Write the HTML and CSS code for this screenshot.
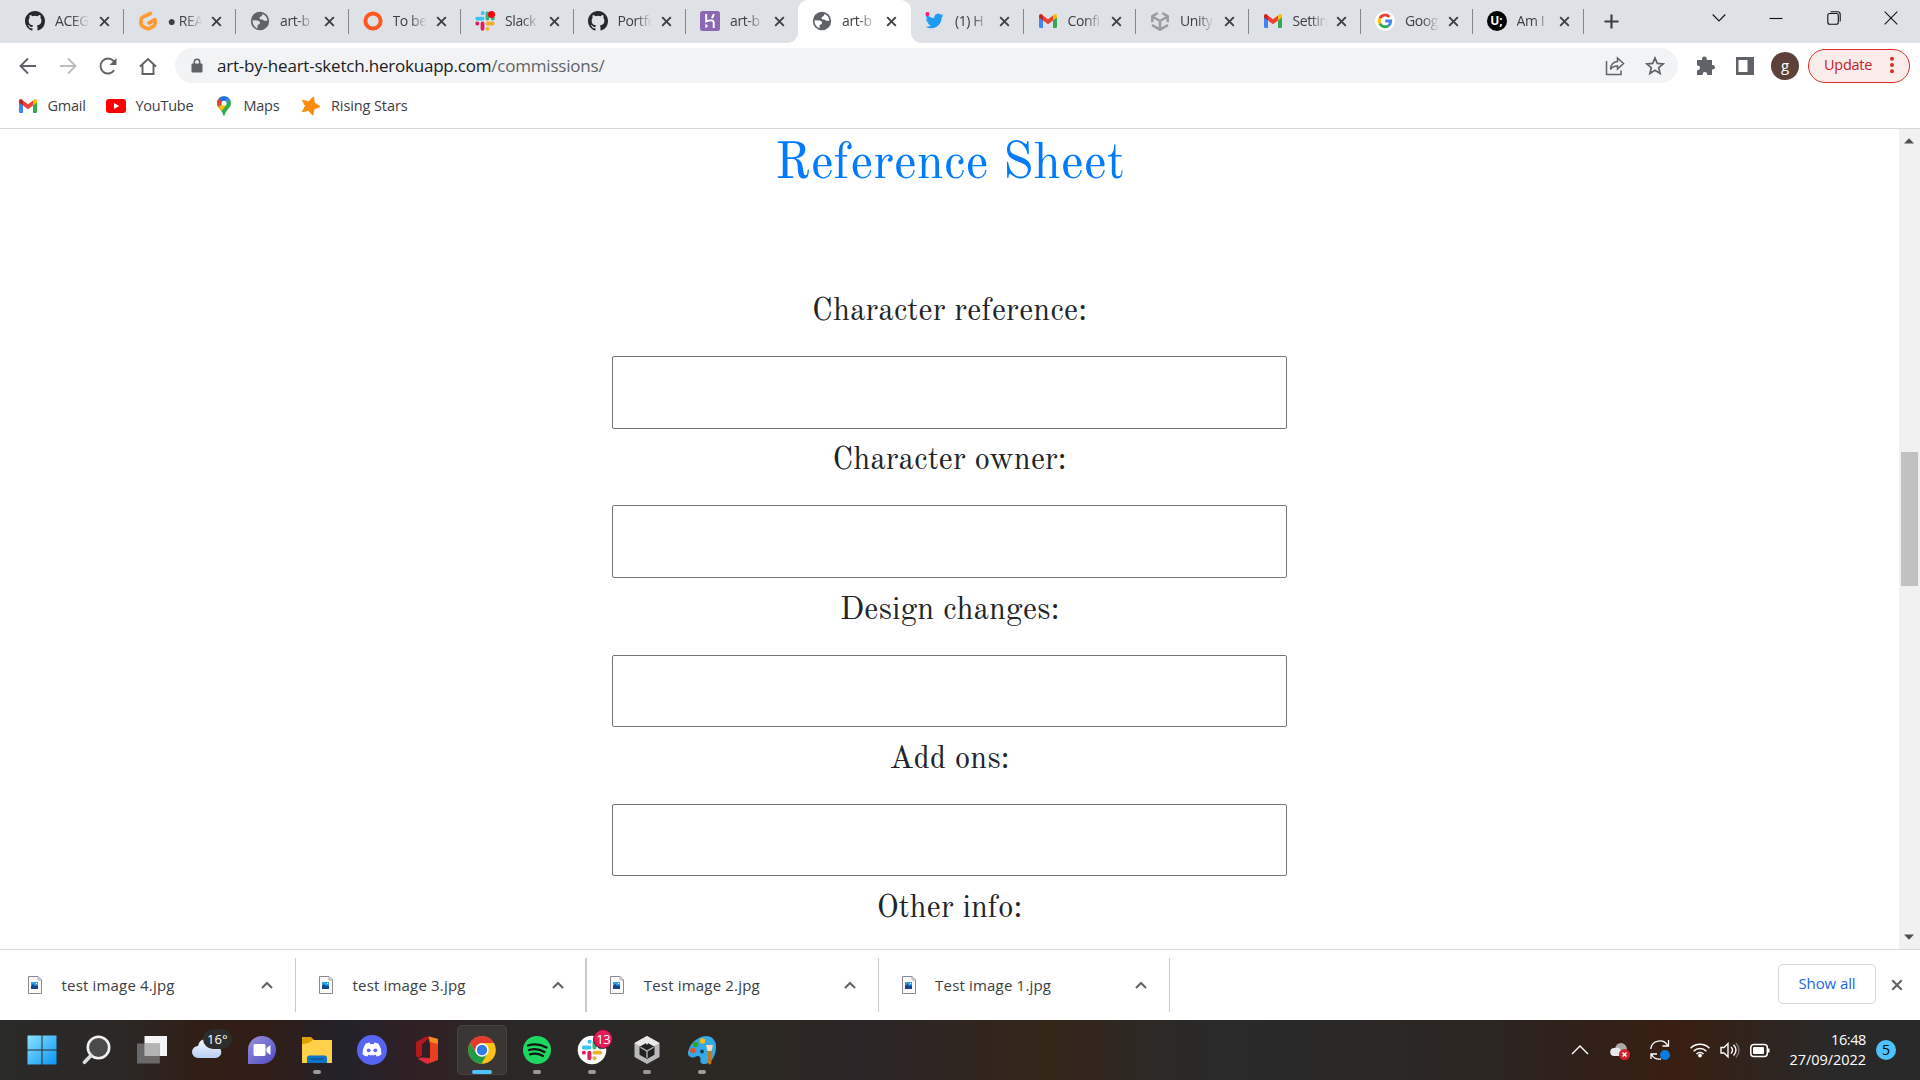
FILE: index.html
```html
<!DOCTYPE html>
<html lang="en">
<head>
<meta charset="utf-8">
<title>art-by-heart</title>
<link rel="stylesheet" href="styles.css">
</head>
<body>
<svg class="defs" aria-hidden="true">
  <symbol id="github" viewBox="0 0 16 16"><path fill="#24292f" d="M8 0C3.58 0 0 3.58 0 8c0 3.54 2.29 6.53 5.47 7.59.4.07.55-.17.55-.38 0-.19-.01-.82-.01-1.49-2.01.37-2.53-.49-2.69-.94-.09-.23-.48-.94-.82-1.13-.28-.15-.68-.52-.01-.53.63-.01 1.08.58 1.23.82.72 1.21 1.87.87 2.33.66.07-.52.28-.87.51-1.07-1.78-.2-3.64-.89-3.64-3.95 0-.87.31-1.59.82-2.15-.08-.2-.36-1.02.08-2.12 0 0 .67-.21 2.2.82a7.6 7.6 0 0 1 4 0c1.53-1.04 2.2-.82 2.2-.82.44 1.1.16 1.92.08 2.12.51.56.82 1.27.82 2.15 0 3.07-1.87 3.75-3.65 3.95.29.25.54.73.54 1.48 0 1.07-.01 1.93-.01 2.2 0 .21.15.46.55.38A8.01 8.01 0 0 0 16 8c0-4.42-3.58-8-8-8z"/></symbol>
  <symbol id="globe" viewBox="0 0 20 20"><circle cx="10" cy="10" r="9.2" fill="#5f6368"/><path fill="var(--tab)" d="M11 2.600c.5 1.600-.2 2.300-1.500 2.600-1 .2-1.200.8-1 1.700.1.700-.4 1-1.200 1-.9 0-1 .5-.8 1.100H11c1 0 1.500.6 1.500 1.500 0 .8.500 1 1.200 1 1 0 1.300-.4 1.600-1l2-.2c-.3 3.300-2.300 5.700-5 6.600v-1.400c-1.400 0-2-.8-2-2v-1L6.500 10H2.700c0-4 3-7.300 8.300-7.400z" opacity="0"/><path fill="var(--tab)" d="M2.600 9.300 7.300 9.500q2.800.3 2.700 2.400 0 1.500-1.600 1.700l-.8.300v3.300C4.500 16.300 2.300 13.200 2.600 9.300zM12.300 3.100c3 1 5 3.700 5.100 6.600l-3.500.1q-.7-1.400-2.100-1.300-2.300.1-2.300-1.500 0-1.400 1.500-1.600 1.500-.3 1.300-2.300z"/></symbol>
  <symbol id="gitpod" viewBox="0 0 20 20"><path d="M12.500 2.300 4.800 6.200Q3 7.100 3 9v3.800q0 1.500 1.400 2.300l4.200 2.300q1.400.8 2.800 0l4.200-2.300q1.400-.8 1.400-2.300V8.500l-6 3.300" fill="none" stroke="#ff9a2e" stroke-width="3.600" stroke-linecap="round" stroke-linejoin="round"/></symbol>
  <symbol id="ring" viewBox="0 0 20 20"><circle cx="10" cy="10" r="7.600" fill="none" stroke="#ff5722" stroke-width="4"/></symbol>
  <symbol id="slack" viewBox="0 0 20 20"><g stroke-width="3.800" stroke-linecap="round"><path stroke="#36c5f0" d="M2.200 7.600h5.300M7.700 2v.2"/><path stroke="#2eb67d" d="M12.400 2.400v5.200M17.800 7.600h.1"/><path stroke="#ecb22e" d="M12.400 12.500h5.400M12.400 17.800h.1"/><path stroke="#e01e5a" d="M7.500 12.500v5.300M2.200 12.500h.1"/></g></symbol>
  <symbol id="heroku" viewBox="0 0 20 20"><rect width="20" height="20" rx="2.500" fill="#8c68b2"/><path fill="none" stroke="#fff" stroke-width="1.900" d="M6.200 3v7.500C9 9.200 13.700 8.500 13.700 11.500V17M13.700 3c-.1 1.700-.9 3-2 4"/><path fill="#fff" d="m5.400 12.800 2.800 2.200-2.800 2.200z"/></symbol>
  <symbol id="twitter" viewBox="0 0 24 24"><path fill="#1d9bf0" d="M23.950 4.570a10 10 0 0 1-2.820.78 4.960 4.960 0 0 0 2.160-2.720 9.860 9.860 0 0 1-3.120 1.180 4.920 4.920 0 0 0-8.380 4.480C7.690 8.090 4.070 6.130 1.640 3.160a4.820 4.820 0 0 0-.67 2.480c0 1.710.87 3.210 2.190 4.100a4.900 4.900 0 0 1-2.230-.62v.06a4.920 4.920 0 0 0 3.950 4.830 4.860 4.860 0 0 1-2.210.09 4.940 4.940 0 0 0 4.600 3.420A9.870 9.870 0 0 1 0 19.540a13.900 13.900 0 0 0 7.550 2.210c9.050 0 14-7.500 14-13.980 0-.21 0-.42-.02-.63a9.940 9.940 0 0 0 2.420-2.570z"/><circle cx="2.600" cy="2.800" r="2.700" fill="#f91880"/></symbol>
  <symbol id="gmail" viewBox="0 0 20 20"><path fill="#4285f4" d="M1 5.500 5 8v9H2.300Q1 17 1 15.700z"/><path fill="#34a853" d="M15 8l4-2.500v10.200q0 1.300-1.300 1.300H15z"/><path fill="#ea4335" d="m5 4.400 5 3.800 5-3.800v5L10 13.200 5 9.400z"/><path fill="#c5221f" d="M1 5q0-2 1.800-2 .8 0 1.500.7L5 4.400v5L1 6.500z"/><path fill="#fbbc04" d="M19 5q0-2-1.800-2-.8 0-1.500.7l-.7.700v5l4-2.900z"/></symbol>
  <symbol id="unity" viewBox="0 0 20 20"><g fill="none" stroke="#9a9c9f" stroke-width="2.500"><path d="M7.800 2 2.300 5.200v6M12.200 2l5.500 3.200v6M2 14.200l8 4.500 8-4.500M10 18v-8M10 10 3.200 6M10 10l6.800-4"/></g><path fill="var(--tab)" d="m10 3 3.600 2L10 7 6.400 5z"/></symbol>
  <symbol id="google" viewBox="0 0 20 20"><circle cx="10" cy="10" r="10" fill="#fff"/><g fill="none" stroke-width="2.900"><path stroke="#ea4335" d="M4.800 7.300A5.800 5.800 0 0 1 14.300 6"/><path stroke="#fbbc05" d="M4.900 7.200a6 6 0 0 0 0 5.600"/><path stroke="#34a853" d="M4.900 12.700a5.800 5.800 0 0 0 8.800 1.800"/><path stroke="#4285f4" d="M10.200 10h5.500q.1 3-2 4.600"/></g></symbol>
  <symbol id="close" viewBox="0 0 12 12"><path d="m1.300 1.300 9.400 9.400m0-9.400-9.400 9.400" fill="none" stroke="currentColor" stroke-width="2.100"/></symbol>
  <symbol id="file" viewBox="0 0 14 18"><path d="M.5.500h9.500l3.500 3.500v13.500H.5z" fill="#fafafa" stroke="#8a8a8a"/><path d="M10 .5V4h3.500" fill="none" stroke="#aaa"/><path fill="#2aa0e8" d="M3 6h7v7H3z"/><path fill="#15468f" d="m3 10 2-2 2.500 2L9 9l1 1v3H3z"/><path fill="#fff" d="M8 7h1v1H8z"/></symbol>
  <symbol id="up" viewBox="0 0 12 8"><path d="m1 7 5-5 5 5" fill="none" stroke="#5f6368" stroke-width="2"/></symbol>
</svg>

<header class="browser">
  <div class="tabs">
    <div class="tab"><svg class="fav"><use href="#github"/></svg><span class="title">ACEG</span><svg class="x"><use href="#close"/></svg></div>
    <div class="tab"><svg class="fav"><use href="#gitpod"/></svg><span class="title">● REA</span><svg class="x"><use href="#close"/></svg></div>
    <div class="tab"><svg class="fav"><use href="#globe"/></svg><span class="title">art-b</span><svg class="x"><use href="#close"/></svg></div>
    <div class="tab"><svg class="fav"><use href="#ring"/></svg><span class="title">To be</span><svg class="x"><use href="#close"/></svg></div>
    <div class="tab"><span class="fav"><svg><use href="#slack"/></svg><i class="alert"></i></span><span class="title">Slack</span><svg class="x"><use href="#close"/></svg></div>
    <div class="tab"><svg class="fav"><use href="#github"/></svg><span class="title">Portfo</span><svg class="x"><use href="#close"/></svg></div>
    <div class="tab no-line"><svg class="fav"><use href="#heroku"/></svg><span class="title">art-b</span><svg class="x"><use href="#close"/></svg></div>
    <div class="tab active"><svg class="fav"><use href="#globe"/></svg><span class="title">art-b</span><svg class="x"><use href="#close"/></svg></div>
    <div class="tab"><svg class="fav bird"><use href="#twitter"/></svg><span class="title">(1) H</span><svg class="x"><use href="#close"/></svg></div>
    <div class="tab"><svg class="fav"><use href="#gmail"/></svg><span class="title">Confi</span><svg class="x"><use href="#close"/></svg></div>
    <div class="tab"><svg class="fav"><use href="#unity"/></svg><span class="title">Unity</span><svg class="x"><use href="#close"/></svg></div>
    <div class="tab"><svg class="fav"><use href="#gmail"/></svg><span class="title">Settin</span><svg class="x"><use href="#close"/></svg></div>
    <div class="tab narrow"><svg class="fav"><use href="#google"/></svg><span class="title">Goog</span><svg class="x"><use href="#close"/></svg></div>
    <div class="tab narrow"><span class="fav ui">U;</span><span class="title">Am I</span><svg class="x"><use href="#close"/></svg></div>
    <svg class="plus" viewBox="0 0 16 16"><path d="M8 .5v15M.5 8h15" stroke="#3c4043" stroke-width="2.300"/></svg>
    <div class="controls">
      <svg viewBox="0 0 14 14"><path d="m.7 3.500 6.300 6.500 6.300-6.500"/></svg>
      <svg viewBox="0 0 14 14"><path d="M.5 7.500h13"/></svg>
      <svg viewBox="0 0 14 14"><rect x=".8" y="2.500" width="10.500" height="10.700" rx="2"/><path d="M3.500.7h7q2.700 0 2.700 2.700v7"/></svg>
      <svg viewBox="0 0 14 14"><path d="m.7.700 12.600 12.600m0-12.600L.7 13.300"/></svg>
    </div>
  </div>

  <div class="toolbar">
    <svg class="nav" viewBox="0 0 20 20"><path d="M18 10H3M10 2.500 2.500 10l7.500 7.500"/></svg>
    <svg class="nav off" viewBox="0 0 20 20"><path d="M2 10h15M10 2.500l7.500 7.500-7.500 7.500"/></svg>
    <svg class="nav" viewBox="0 0 20 20"><path d="M16.200 14.300a7.500 7.500 0 1 1-.7-9.400l1.500 1.900"/><path d="M18.500 2v7h-7z" fill="#5f6368" stroke="none"/></svg>
    <svg class="nav" viewBox="0 0 20 20"><path d="M2 10.500 10 3l8 7.500M4.500 9v9h11V9"/></svg>
    <div class="address">
      <svg class="lock" viewBox="0 0 12 15"><rect x=".5" y="5.500" width="11" height="9" rx="1" fill="#5f6368"/><path d="M3.300 6V4a2.700 2.700 0 0 1 5.400 0v2" fill="none" stroke="#5f6368" stroke-width="1.600"/></svg>
      <span class="url">art-by-heart-sketch.herokuapp.com<span>/commissions/</span></span>
      <svg class="share" viewBox="0 0 20 20"><path d="M1.500 5v13.500h14.500v-4M12.500 2l6 5.500-6 5.500v-3q-5 0-7 3.500.5-7.500 7-8z" fill="none" stroke="#5f6368" stroke-width="1.500"/></svg>
      <svg class="star" viewBox="0 0 20 20"><path d="m10 2 2.300 5.400 5.800.5-4.400 3.800 1.400 5.700L10 14.300l-5.100 3.100 1.400-5.700-4.400-3.800 5.800-.5z" fill="none" stroke="#5f6368" stroke-width="1.700"/></svg>
    </div>
    <svg class="puzzle" viewBox="0 0 20 20"><path fill="#5f6368" d="M2 4h5V3a2.400 2.400 0 0 1 4.800 0v1H17v5h.700a2.300 2.300 0 0 1 0 4.600H17V19h-4.800v-.6a2.300 2.300 0 0 0-4.600 0v.6H2v-4.800h.600a2.400 2.400 0 0 0 0-4.800H2z"/></svg>
    <svg class="panel" viewBox="0 0 18 18"><path fill="#5f6368" d="M0 0h18v18H0zM2.500 3v12h9V3z" fill-rule="evenodd"/></svg>
    <span class="avatar">g</span>
    <div class="update"><span>Update</span><svg viewBox="0 0 4 18"><g fill="#d93025"><circle cx="2" cy="2.700" r="2"/><circle cx="2" cy="9" r="2"/><circle cx="2" cy="15.300" r="2"/></g></svg></div>
  </div>

  <nav class="bookmarks">
    <svg><use href="#gmail"/></svg><span class="b1">Gmail</span>
    <svg viewBox="0 0 20 20"><rect y="3" width="20" height="14" rx="3" fill="#f00"/><path d="m8 7 5.300 3L8 13z" fill="#fff"/></svg><span class="b2">YouTube</span>
    <svg viewBox="0 0 20 20"><clipPath id="pin"><path d="M10 .3a7 7 0 0 1 7 7c0 4.500-4.800 6-6.200 11.800q-.8 1.400-1.600 0C7.800 13.300 3 11.800 3 7.300a7 7 0 0 1 7-7z"/></clipPath><g clip-path="url(#pin)"><path fill="#34a853" d="M0 0h20v20H0z"/><path fill="#fbbc04" d="M0 14 10 7l2.500 2L5 18z"/><path fill="#ea4335" d="M0 0h6l3 6-6.500 7z"/><path fill="#1a73e8" d="M4.500 2.500 9 6l6-5L8-1z"/><path fill="#4285f4" d="m14.500 1-6 6 1 3 8-8z"/></g><circle cx="10" cy="7.300" r="2.500" fill="#fff"/></svg><span class="b3">Maps</span>
    <svg viewBox="0 0 20 20"><path fill="#f98e0a" stroke="#f98e0a" stroke-linejoin="round" d="m12.500.8.9 6.300 5.600 3.400-6 2.700-1.200 6-4.200-4.700-6.300 1.200L4.500 10 1.400 4.300l6.300 1.400z"/></svg><span class="b4">Rising Stars</span>
  </nav>
</header>

<div class="viewport">
  <main class="page">
    <h1>Reference Sheet</h1>
    <form class="form">
      <label for="f1">Character reference:</label><input id="f1" type="text">
      <label for="f2">Character owner:</label><input id="f2" type="text">
      <label for="f3">Design changes:</label><input id="f3" type="text">
      <label for="f4">Add ons:</label><input id="f4" type="text">
      <label>Other info:</label>
    </form>
  </main>
  <div class="scrollbar"><svg viewBox="0 0 10 6"><path d="M0 5.500h10L5 .3z"/></svg><i class="thumb"></i><svg viewBox="0 0 10 6"><path d="M0 .5h10L5 5.700z"/></svg></div>
</div>

<section class="downloads">
  <div class="item"><svg class="file"><use href="#file"/></svg><span>test image 4.jpg</span><svg class="up"><use href="#up"/></svg></div>
  <div class="item thick"><svg class="file"><use href="#file"/></svg><span>test image 3.jpg</span><svg class="up"><use href="#up"/></svg></div>
  <div class="item"><svg class="file"><use href="#file"/></svg><span>Test image 2.jpg</span><svg class="up"><use href="#up"/></svg></div>
  <div class="item"><svg class="file"><use href="#file"/></svg><span>Test image 1.jpg</span><svg class="up"><use href="#up"/></svg></div>
  <button class="showall">Show all</button>
  <svg class="dismiss"><use href="#close"/></svg>
</section>

<footer class="taskbar">
  <div class="apps">
    <div class="app"><svg viewBox="0 0 30 30"><defs><linearGradient id="win" x2="1" y2="1"><stop stop-color="#8ae4ff"/><stop offset="1" stop-color="#0a94f5"/></linearGradient></defs><path fill="url(#win)" d="M.5.500h14v14H.5zM15.500.500h14v14h-14zM.5 15.500h14v14H.5zM15.500 15.500h14v14h-14z"/></svg></div>
    <div class="app"><svg viewBox="0 0 30 30"><circle cx="16.500" cy="12.500" r="10.700" fill="#4b4b4b" stroke="#f2f2f2" stroke-width="2.600"/><path d="m9 20.500-6.500 6.800" stroke="#ddd" stroke-width="3.600" stroke-linecap="round"/></svg></div>
    <div class="app"><svg viewBox="0 0 30 30"><path fill="#f4f4f4" d="M7.500 1H30v20H7.500z"/><path fill="#757575" fill-opacity=".85" d="M0 8.500h22.800v20H0z"/><path fill="#b4b4b4" d="M7.500 8.500h15.300V21H7.500z"/></svg></div>
    <div class="app"><svg viewBox="0 0 30 30"><defs><linearGradient id="cl" x2="0" y2="1"><stop stop-color="#f4f8ff"/><stop offset="1" stop-color="#b9cff2"/></linearGradient></defs><path fill="url(#cl)" d="M6 23a6 6 0 0 1 0-12q1.500-7 8-7t8.500 7a6 6 0 0 1 1.500 12z"/></svg><b class="temp">16°</b></div>
    <div class="app"><svg viewBox="0 0 30 30"><defs><linearGradient id="ch" x2="1" y2="1"><stop stop-color="#9a92d8"/><stop offset="1" stop-color="#4f49c4"/></linearGradient></defs><path fill="url(#ch)" d="M1 29V15A14 14 0 1 1 15 29z"/><rect x="6.500" y="9" width="12" height="12" rx="1.500" fill="#fff"/><path fill="#fff" d="m19.500 13 4-3v10l-4-3z"/></svg></div>
    <div class="app run"><svg viewBox="0 0 30 30"><path fill="#e0a000" d="M0 2h9l4 4v6H0z"/><path fill="#ffd04a" d="M0 9q7 0 11-4h19v23H0z"/><path fill="#0b76c5" d="M5 28v-5q0-2.500 2.500-2.500h15Q25 20.500 25 23v5z"/><path d="M8.500 24h13" stroke="#084e91" stroke-width="1.300"/></svg></div>
    <div class="app"><svg viewBox="0 0 30 30"><circle cx="15" cy="15" r="15" fill="#5865f2"/><path fill="#fff" d="M8.500 8.800q2-1 4-1.300l.8 1.400h3.400l.8-1.400q2 .3 4 1.300 3.200 5 3 10.500-2 1.600-4.700 2.300l-1.200-1.900q-3.600 1-7.200 0l-1.200 1.900q-2.700-.7-4.700-2.300-.200-5.500 3-10.500z"/><circle cx="11.700" cy="15.300" r="1.900" fill="#5865f2"/><circle cx="18.300" cy="15.300" r="1.900" fill="#5865f2"/></svg></div>
    <div class="app"><svg viewBox="0 0 30 30"><path fill="#b3181e" d="M4 7 14 1.500l3.500 1L10 9.500V20l-3.500 3L4 21z"/><path fill="#ea3e23" d="M16 1.500 26 4v21l-8 3V9z"/><path fill="#f58a1f" d="m17 1.500 9 2.500v5l-8-2z"/><path fill="#e22a45" d="m9 22.500 9 .5v5l-3 1-9-5z"/></svg></div>
    <div class="app current"><svg viewBox="0 0 30 30"><circle cx="15" cy="15" r="13.800" fill="#fbc116"/><path fill="#e33b2e" d="M3 8a13.800 13.800 0 0 1 24 0H15a7 7 0 0 0-6.500 9z"/><path fill="#23994a" d="M3 8a13.800 13.800 0 0 0 11.500 20.800l6-10.800q-8 5-12-1z"/><circle cx="15" cy="15" r="6.700" fill="#fff"/><circle cx="15" cy="15" r="5.200" fill="#327ce9"/></svg></div>
    <div class="app run"><svg viewBox="0 0 30 30"><circle cx="15" cy="15" r="14" fill="#1ed760"/><path d="M6 10.500q9.500-3 18.500 2M7 15q8.500-2.300 15.500 2M8 19.300q7-1.800 13 1.700" fill="none" stroke="#141414" stroke-width="2.300" stroke-linecap="round"/></svg></div>
    <div class="app run"><svg viewBox="0 0 30 30"><circle cx="15" cy="15" r="14.300" fill="#fff"/><use href="#slack" x="4.500" y="4.500" width="21" height="21"/></svg><b class="count">13</b></div>
    <div class="app run"><svg viewBox="0 0 30 30"><path fill="#b9b9b9" d="m15 1 12.500 7v14L15 29 2.500 22V8z"/><path fill="#e9e9e9" d="m15 1 12.500 7L15 15 2.500 8z"/><path fill="#222" d="m15 7.500 7.500 4.200v8L15 24l-7.500-4.300v-8z"/><path fill="#e9e9e9" d="M13.700 2h2.600v6l-1.300 2-1.300-2z"/><path d="m8.500 12.300 6.500 3.700 6.500-3.700M15 16v7" fill="none" stroke="#bbb" stroke-width="1.300"/></svg></div>
    <div class="app run"><svg viewBox="0 0 30 30"><path fill="#35a9e8" d="M1 17C3 7 12 1 20 1q9 1 9 11c0 9-5 17-12 17-6 0-2-5.500-4.500-7.500S8 23 5 22.500 .5 20 1 17z"/><circle cx="8.500" cy="9.500" r="2.700" fill="#35a51e"/><circle cx="15.500" cy="6" r="2.700" fill="#fbbd18"/><circle cx="5.800" cy="15.500" r="2.700" fill="#e4512b"/><circle cx="15" cy="16.500" r="2" fill="#1c3a55"/><path fill="#c87514" d="M21 16h3l.5 12q-2 3-3.500 0z"/><path fill="#f3dcba" d="M19 10h7l-1.500 6h-4z"/></svg></div>
  </div>
  <div class="tray">
    <svg viewBox="0 0 20 20"><path d="m2 14 8-8 8 8" fill="none" stroke="#fff" stroke-width="1.400"/></svg>
    <svg viewBox="0 0 20 20"><path fill="#aaa" d="M5 9q1-6 6-6 5 .5 6 6l-3 5H6z"/><path fill="#e8e8e8" d="M4.500 16a4 4 0 0 1-.5-8q6-2 7 3v5z"/><circle cx="14.500" cy="14.500" r="5.500" fill="#d41f2c"/><path d="m12.500 12.500 4 4m0-4-4 4" stroke="#fff" stroke-width="1.500"/></svg>
    <svg viewBox="0 0 20 20"><path d="M.8 9a9 9 0 0 1 17-3M18.500 0v6h-6M1 19v-5h6M1.500 14.500A9 9 0 0 0 11 19" fill="none" stroke="#fff" stroke-width="1.300"/><circle cx="15" cy="15" r="5" fill="#0b7bdc"/></svg>
    <svg class="wifi" viewBox="0 0 20 20"><g fill="none" stroke="#fff" stroke-width="1.500"><path d="M.6 8.200a13.300 13.300 0 0 1 18.800 0M3.600 11.200a9 9 0 0 1 12.800 0M6.500 14a5 5 0 0 1 7 0"/></g><circle cx="10" cy="15.500" r="1.900" fill="#fff"/></svg>
    <svg class="sound" viewBox="0 0 20 20"><g fill="none" stroke="#fff" stroke-width="1.400"><path d="M1 7.500h3L8 3.600v13.300L4 13H1zM11 7q3 3 0 6.500M13.500 4.800q5 5.200 0 10.700"/><path d="M16 3q6 7 0 14.500" stroke="#777"/></g></svg>
    <svg class="battery" viewBox="0 0 20 20"><rect x=".8" y="4.500" width="16.500" height="12" rx="3" fill="none" stroke="#fff" stroke-width="1.500"/><rect x="3" y="7" width="11" height="7" rx="1" fill="#fff"/><path d="M18.500 8.500v4" stroke="#fff" stroke-width="2"/></svg>
    <div class="clock"><span class="time">16:48</span><span>27/09/2022</span></div>
    <span class="notes">5</span>
  </div>
</footer>
</body>
</html>
```
FILE: styles.css
```css
* { box-sizing: border-box; }
body {
  margin: 0;
  width: 1920px;
  height: 1080px;
  overflow: hidden;
  display: flex;
  flex-direction: column;
  background: #fff;
  color: #3c4043;
  font: 15px/20px "Open Sans", "Noto Sans", sans-serif;
}
svg { display: block; flex: none; }
.defs { position: absolute; width: 0; height: 0; }

.browser { height: 129px; flex: none; border-bottom: 1px solid #d5d6d8; }
.tabs { --tab: #dee1e6; display: flex; height: 43px; padding-left: 11px; background: #dee1e6; }
.tab {
  position: relative;
  display: flex;
  align-items: center;
  width: 112.5px;
  flex: none;
  padding: 0 14px 1px 14px;
}
.tab.narrow { width: 111.500px; }
.tab::after { content: ""; position: absolute; right: 0; top: 9px; width: 1px; height: 25px; background: #80868b; }
.tab.no-line::after, .tab.active::after { display: none; }
.fav { position: relative; width: 20px; height: 20px; flex: none; }
.fav svg { width: 20px; height: 20px; }
.bird { width: 19px; height: 18px; margin-right: 1px; }
.alert { position: absolute; right: 0; top: 0; width: 7px; height: 7px; border-radius: 50%; background: #f00; }
.ui { border-radius: 50%; background: #000; color: #fff; font: bold 12px/20px "Open Sans", sans-serif; text-align: center; }
.title {
  width: 34px;
  margin-left: 10px;
  overflow: hidden;
  white-space: nowrap;
  font-size: 14px;
  letter-spacing: -.4px;
  -webkit-mask-image: linear-gradient(90deg, #000 50%, transparent);
  mask-image: linear-gradient(90deg, #000 50%, transparent);
}
.x { width: 11px; height: 11px; margin-left: auto; color: #3c4043; }
.active { --tab: #fff; background: #fff; border-radius: 10px 10px 0 0; margin-left: -.5px; margin-right: .5px; }
.active::before {
  content: "";
  position: absolute;
  left: -10px;
  right: -10px;
  bottom: 0;
  height: 10px;
  background:
    radial-gradient(circle at 0 0, transparent 9.500px, #fff 10px) left / 10px 10px no-repeat,
    radial-gradient(circle at 100% 0, transparent 9.500px, #fff 10px) right / 10px 10px no-repeat;
}
.plus { width: 15px; height: 15px; margin: 14px 0 0 20px; }
.controls { display: flex; gap: 43.500px; margin: 11px 22px 0 auto; }
.controls svg { width: 14px; height: 14px; fill: none; stroke: #111; stroke-width: 1.100; }

.toolbar { display: flex; align-items: center; height: 45px; padding: 0 10px 0 18px; }
.nav { width: 20px; height: 20px; margin-right: 20px; fill: none; stroke: #5f6368; stroke-width: 1.900; }
.nav.off { stroke: #babcbe; }
.address { display: flex; align-items: center; width: 1503px; height: 35px; margin-left: -3px; padding: 0 13px 0 16px; border-radius: 18px; background: #f1f3f4; }
.lock { width: 12px; height: 15px; }
.url { margin-left: 14px; color: #202124; font-size: 17px; letter-spacing: -.21px; }
.url span { color: #5f6368; }
.share { width: 20px; height: 20px; margin: 0 20px 0 auto; }
.star { width: 20px; height: 20px; }
.puzzle { width: 20px; height: 20px; margin-left: 17px; }
.panel { width: 18px; height: 18px; margin-left: 21px; }
.avatar { width: 28px; height: 28px; margin-left: 17px; border-radius: 50%; background: #5d4037; color: #fff; font-size: 15px; line-height: 26px; text-align: center; }
.update { display: flex; align-items: center; justify-content: space-between; width: 102px; height: 34px; margin-left: 9px; padding: 0 15px 1px; border: 1px solid #d93025; border-radius: 17px; background: #faecea; color: #c5221f; font-size: 14.500px; letter-spacing: -.25px; }
.update svg { width: 4px; height: 18px; }

.bookmarks { display: flex; align-items: center; height: 36px; padding-left: 18px; font-size: 14.500px; letter-spacing: -.25px; }
.bookmarks svg { width: 20px; height: 20px; margin-right: 9.500px; }
.bookmarks span { white-space: nowrap; }
.b1 { width: 58.500px; }
.b2 { width: 78.500px; }
.b3 { width: 57px; }
.b4 { padding-left: 1px; letter-spacing: -.1px; }

.viewport { display: flex; height: 820px; flex: none; }
.page { width: 1899px; overflow: hidden; color: #212529; font-family: "Old Standard TT", "Liberation Serif", serif; text-align: center; }
h1 { height: 64px; margin: 0; padding-top: 4px; color: #007bff; font-size: 50px; font-weight: 400; line-height: 64px; }
.form { display: flex; flex-direction: column; align-items: center; padding-top: 93.200px; }
label { height: 40px; margin-bottom: 30px; padding-top: 3px; font-size: 31.250px; line-height: 46px; }
input { width: 675px; height: 72.600px; margin: 0 0 6.650px; padding: 0 8px; border: 1px solid #767676; border-radius: 2px; background: #fff; font-size: 31px; }
.scrollbar { display: flex; flex-direction: column; align-items: center; width: 21px; padding: 9px 1px 9px 0; background: #f1f1f1; }
.scrollbar svg { width: 10px; height: 6px; fill: #505050; }
.thumb { width: 17px; height: 134px; margin: 308px 0 auto; background: #c1c1c1; }

.downloads { display: flex; align-items: center; height: 71px; flex: none; border-top: 1px solid #d5d6d8; }
.item { display: flex; align-items: center; width: 291.300px; height: 54px; padding: 0 22px 0 23px; border-right: 1px solid #c9cbce; }
.item:first-child { width: 296px; padding-left: 28px; }
.item.thick { border-right-width: 2px; padding-right: 21px; }
.file { width: 14px; height: 18px; }
.item span { margin-left: 19.500px; font-size: 15px; letter-spacing: .18px; }
.up { width: 12px; height: 8px; margin-left: auto; }
.showall { width: 98px; height: 40px; margin: 0 15px 2px auto; padding: 0 0 2px; border: 1px solid #d5d7da; border-radius: 5px; background: #fff; color: #1a66e0; font: 15px "Open Sans", sans-serif; letter-spacing: -.1px; }
.dismiss { width: 12px; height: 12px; margin-right: 17px; color: #5f6368; }

.taskbar {
  display: flex;
  justify-content: space-between;
  align-items: center;
  height: 60px;
  background: linear-gradient(90deg, #2a2a29 0, #2b2826 120px, #311e15 200px, #301e17 270px, #23222b 345px, #302024 410px, #2d2526 480px, #2a2928 540px, #2c2822 780px, #2c2527 860px, #30261f 970px, #352619 1050px, #2d2925 1150px, #292a2b 1230px, #2c2622 1480px, #302019 1580px, #391f11 1680px, #30241e 1760px, #2a2929 1830px, #29292a 1920px);
}
.apps { display: flex; padding-left: 16.500px; gap: 5.080px; }
.app { position: relative; display: flex; align-items: center; justify-content: center; width: 50px; height: 50px; border-radius: 5px; }
.app svg { width: 30px; height: 30px; }
.current { background: #393635; box-shadow: inset 0 0 0 1px #454241; }
.run::after, .current::after { content: ""; position: absolute; left: 21px; bottom: 1px; width: 8px; height: 4px; border-radius: 2px; background: #9b9b9b; }
.current::after { left: 15px; width: 20px; background: #4cc2ff; }
.temp { position: absolute; left: 21px; top: 4px; width: 29px; height: 20px; border-radius: 10px; background: #2d2d2d; color: #fff; font: 13px/20px "Open Sans", sans-serif; text-align: center; }
.count { position: absolute; left: 27px; top: 5px; width: 18px; height: 18px; border-radius: 50%; background: #e01e5a; box-shadow: 0 0 0 1px #57152b; color: #fff; font: 13px/18px "Open Sans", sans-serif; text-align: center; letter-spacing: -.5px; }
.tray { display: flex; align-items: center; padding-right: 24px; color: #fff; }
.tray svg { width: 20px; height: 20px; margin-right: 20px; }
.tray .wifi, .tray .sound { margin-right: 10px; }
.tray .battery { margin-right: 18px; }
.clock { width: 78px; display: flex; flex-direction: column; align-items: flex-end; font-size: 14.500px; line-height: 20px; letter-spacing: -.05px; }
.time { letter-spacing: -.4px; }
.notes { width: 20px; height: 20px; margin-left: 10px; border-radius: 50%; background: #4cc2ff; color: #000; font-size: 14px; line-height: 20px; text-align: center; }
```
